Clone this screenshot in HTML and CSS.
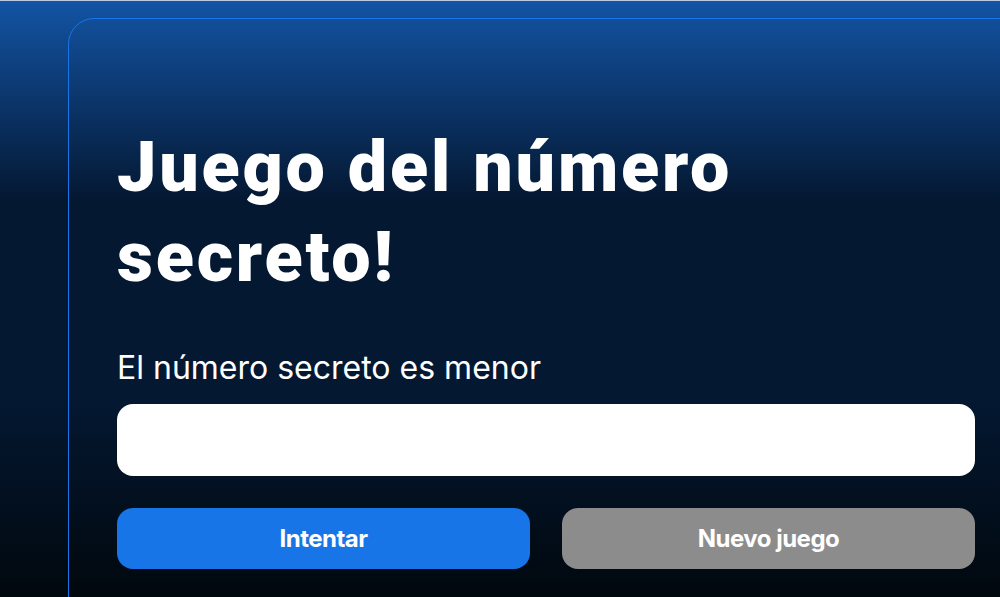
FILE: index.html
```html
<!DOCTYPE html>
<html lang="es">
<head>
<meta charset="utf-8">
<title>Juego del número secreto</title>
<link rel="stylesheet" href="styles.css">
</head>
<body>
<main class="container">
  <section class="content">
    <h1 class="title">Juego del número secreto!</h1>
    <p class="text">El número secreto es menor</p>
    <input class="field" type="number">
    <div class="buttons">
      <button class="btn btn-primary">Intentar</button>
      <button class="btn btn-secondary">Nuevo juego</button>
    </div>
  </section>
</main>
</body>
</html>
```
FILE: styles.css
```css
html, body {
  margin: 0;
  height: 100%;
}
body {
  background: linear-gradient(#1354A5 0%, #041832 33.33%, #041832 66.67%, #01080E 100%);
  border-top: 1px solid #b9c9e4;
  box-sizing: border-box;
  padding: 17px 0 0 68px;
  overflow: hidden;
}
.container {
  width: 1240px;
  height: 700px;
  border: 1px solid #1875E8;
  border-radius: 26px;
  box-sizing: border-box;
  padding: 0 0 0 48px;
}
.content {
  width: 858px;
  display: flex;
  flex-direction: column;
}
.title {
  margin: 103px 0 0 0;
  font-family: Roboto, "Liberation Sans", sans-serif;
  font-weight: 900;
  font-size: 70px;
  line-height: 90px;
  color: #ffffff;
  letter-spacing: 2.8px;
}
.text {
  margin: 48px 0 0 0;
  font-family: Inter, "Noto Sans", sans-serif;
  font-size: 32px;
  line-height: 36px;
  color: #ffffff;
}
.field {
  margin-top: 18px;
  height: 72px;
  border: none;
  border-radius: 16px;
  background: #ffffff;
  box-sizing: border-box;
  padding: 0 20px;
}
.buttons {
  margin-top: 32px;
  display: flex;
  gap: 32px;
}
.btn {
  flex: 1;
  height: 61px;
  border: none;
  border-radius: 16px;
  font-family: Inter, "Noto Sans", sans-serif;
  font-weight: 700;
  font-size: 24px;
  letter-spacing: -0.5px;
  color: #ffffff;
}
.btn-primary { background: #1875E8; }
.btn-secondary { background: #8C8C8C; }
```
